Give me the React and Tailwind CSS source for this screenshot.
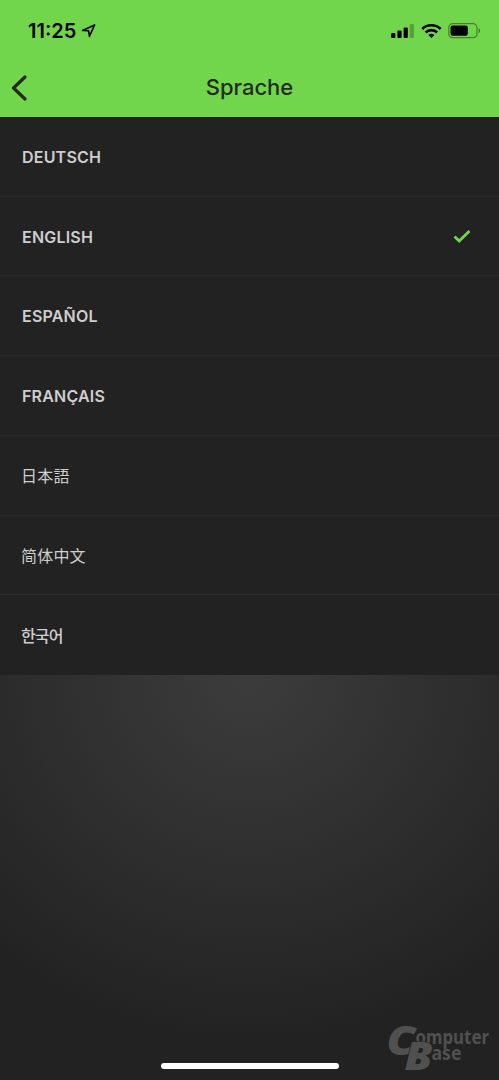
import React, { useState } from 'react';

const languages = [
  { id: 'de', label: 'DEUTSCH', className: "font-['Inter',sans-serif] font-semibold tracking-[0.2px] pt-[2px] pl-px" },
  { id: 'en', label: 'ENGLISH', className: "font-['Inter',sans-serif] font-semibold tracking-[0.2px] pt-[2px] pl-px" },
  { id: 'es', label: 'ESPAÑOL', className: "font-['Inter',sans-serif] font-semibold tracking-[0.2px] pt-[1px] pl-px" },
  { id: 'fr', label: 'FRANÇAIS', className: "font-['Inter',sans-serif] font-semibold tracking-[0.2px] pt-[2px] pl-px" },
  { id: 'ja', label: '日本語', className: "font-['Noto_Sans_CJK_JP',sans-serif] font-normal tracking-[0.2px]" },
  { id: 'zh', label: '简体中文', className: "font-['Noto_Sans_CJK_SC',sans-serif] font-normal tracking-[0.2px] pt-px" },
  { id: 'ko', label: '한국어', className: "font-['Noto_Sans_CJK_KR',sans-serif] font-medium tracking-[-0.9px]" },
];

function LocationIcon() {
  return (
    <svg width="15" height="15" viewBox="0 0 15 15" fill="none" stroke="black" strokeWidth="1.6" strokeLinejoin="round">
      <path d="M1.6 6.4 L13.6 0.9 L8.4 12.4 L7.6 6.8 Z" />
    </svg>
  );
}

function SignalIcon() {
  return (
    <svg width="24" height="16" viewBox="0 0 24 16">
      <rect x="0.2" y="10" width="4.2" height="5" rx="1" />
      <rect x="6.4" y="7.5" width="4.2" height="7.5" rx="1" />
      <rect x="12.6" y="4.5" width="4.2" height="10.5" rx="1" />
      <rect x="18.7" y="1" width="4.2" height="14" rx="1" opacity="0.25" />
    </svg>
  );
}

function WifiIcon() {
  return (
    <svg width="21" height="16" viewBox="0 0 21 16" fill="none" stroke="black" strokeWidth="2.7">
      <path d="M1.2 5.9 A13.4 13.4 0 0 1 19.6 5.9" />
      <path d="M4.6 9.5 A8.5 8.5 0 0 1 16.2 9.5" />
      <path d="M10.4 15 L7.3 12 Q10.4 9.4 13.5 12 Z" fill="black" stroke="none" />
    </svg>
  );
}

function BatteryIcon() {
  return (
    <svg width="33" height="16" viewBox="0 0 33 16">
      <rect x="0.7" y="0.7" width="28.3" height="14" rx="4" fill="none" stroke="black" strokeOpacity="0.4" strokeWidth="1.2" />
      <rect x="2.5" y="2.6" width="17.3" height="10.2" rx="2" />
      <path d="M30.6 5.3 Q32.2 6 32.2 7.7 Q32.2 9.4 30.6 10.1 Z" opacity="0.45" />
    </svg>
  );
}

function Watermark() {
  return (
    <svg width="115" height="60" viewBox="0 0 115 60" fill="#505050" className="absolute right-0 bottom-0">
      <g fontFamily="'Noto Sans', sans-serif" fontWeight="700">
        <text x="31.5" y="24.3" fontSize="19.5" textLength="73.5" lengthAdjust="spacingAndGlyphs">omputer</text>
        <text x="47.5" y="40.3" fontSize="19.5" textLength="30" lengthAdjust="spacingAndGlyphs">ase</text>
      </g>
      <g fontFamily="'Open Sans', sans-serif" fontWeight="800" fontStyle="italic" stroke="#222222" strokeWidth="1.2" paintOrder="stroke">
        <text x="2.5" y="35" fontSize="40" textLength="29" lengthAdjust="spacingAndGlyphs">C</text>
        <text x="20.5" y="50" fontSize="39" textLength="28" lengthAdjust="spacingAndGlyphs">B</text>
      </g>
    </svg>
  );
}

export default function App() {
  const [selected, setSelected] = useState('en');

  return (
    <div className="relative flex h-[1080px] w-[499px] flex-col overflow-hidden bg-[#222222] font-['Inter',sans-serif]">
      <header className="h-[117px] shrink-0 bg-[#72d64d]">
        <div className="flex h-[60px] items-center justify-between pr-[18px] pl-7">
          <div className="flex items-center gap-[5px] pt-[2px]">
            <span className="text-[20px] leading-6 font-semibold text-black">11:25</span>
            <LocationIcon />
          </div>
          <div className="flex items-center gap-[6px] pt-[1px]">
            <SignalIcon />
            <WifiIcon />
            <BatteryIcon />
          </div>
        </div>
        <div className="grid h-[55px] grid-cols-[60px_1fr_60px] items-center">
          <button className="pl-[11px]" aria-label="Zurück">
            <svg width="17" height="26" viewBox="0 0 17 26" fill="none" stroke="#222b1e" strokeWidth="3.2" strokeLinecap="round" strokeLinejoin="round">
              <path d="M14 2 L2.5 13 L14 24" />
            </svg>
          </button>
          <h1 className="text-center text-[22px] leading-[55px] font-medium text-[#222b1e]">Sprache</h1>
        </div>
      </header>

      <ul className="grid h-[558px] shrink-0 grid-rows-7 bg-[#222222]">
        {languages.map(l => (
          <li
            key={l.id}
            onClick={() => setSelected(l.id)}
            className="flex items-center justify-between border-b border-[#2b2b2b] pr-[28px] pl-[21px] text-[16px] text-[#cecece] last:border-0"
          >
            <span className={l.className}>{l.label}</span>
            {selected === l.id && (
              <svg width="18" height="14" viewBox="0 0 18 14" fill="none" stroke="#72d64d" strokeWidth="2.8">
                <path d="M1.5 7.5 L6.2 12 L16.5 2" />
              </svg>
            )}
          </li>
        ))}
      </ul>

      <div className="flex flex-1 items-end justify-center bg-[radial-gradient(385px_370px_at_250px_0px,#3c3c3c_0%,#222222_100%)] pb-[11px]">
        <div className="h-[6px] w-[178px] rounded-full bg-white" />
      </div>
      <Watermark />
    </div>
  );
}
